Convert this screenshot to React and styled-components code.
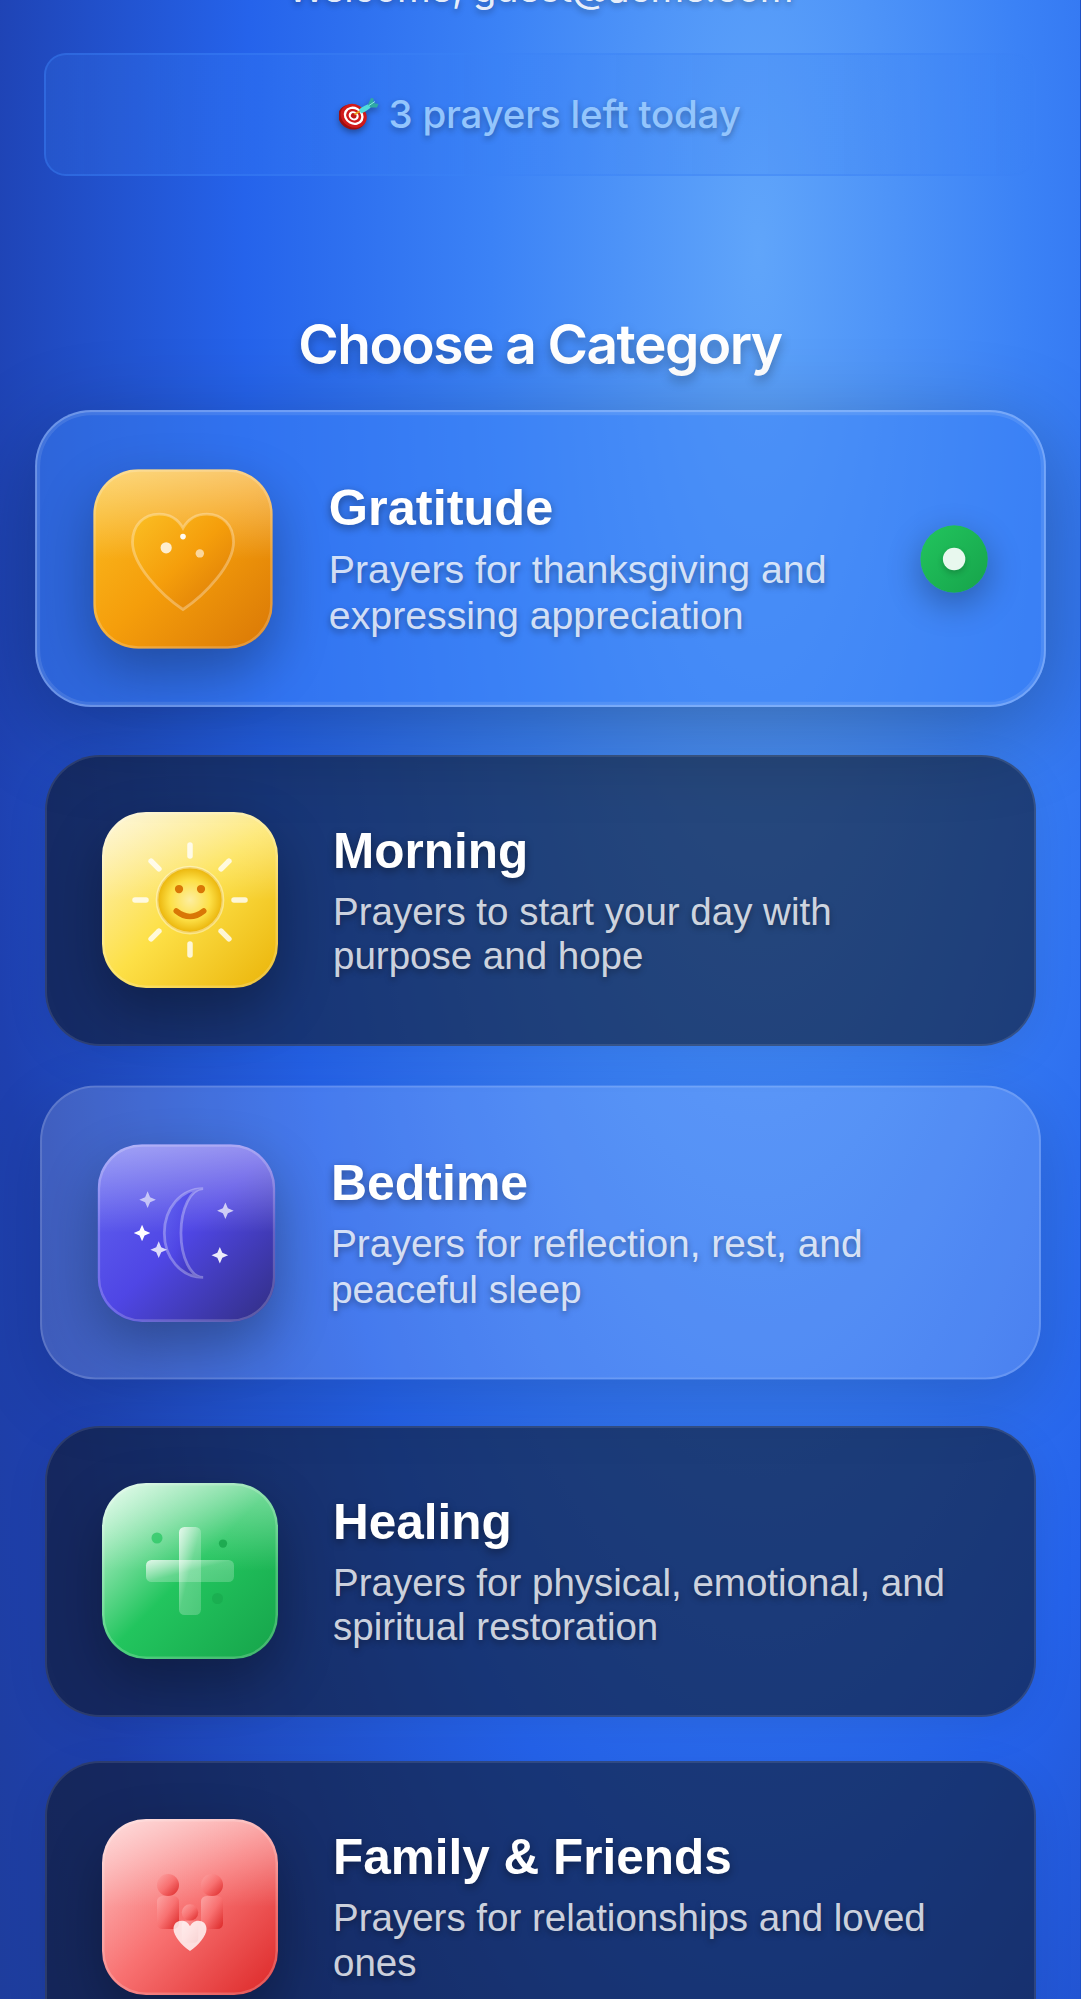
import React from "react";
import styled, { createGlobalStyle, css } from "styled-components";

const Global = createGlobalStyle`
  * { box-sizing: border-box; }
  html, body { margin: 0; padding: 0; height: 1999px; overflow: hidden; background: #1e40af; }
`;

const Page = styled.main`
  height: 1999px;
  overflow: hidden;
  padding: 0 44px;
  display: flex;
  flex-direction: column;
  background: radial-gradient(1070px 3475px at 758px 250px, #60a5fa 0%, #3b82f6 25%, #2563eb 48%, #1e40af 74%, #1e3a8a 100%);
  border-right: 1px solid #1d4fc4;
  font-family: "Liberation Sans", Arial, sans-serif;
`;

const Welcome = styled.p`
  margin: -35px 0 0;
  height: 46px;
  line-height: 46px;
  text-align: center;
  font-family: Inter, sans-serif;
  font-size: 38.5px;
  letter-spacing: -0.6px;
  color: rgba(255, 255, 255, 0.9);
  text-shadow: 0 3px 6px rgba(0, 0, 0, 0.3);
`;

const Quota = styled.section`
  margin-top: 42px;
  height: 123px;
  flex-shrink: 0;
  display: flex;
  align-items: center;
  justify-content: center;
  gap: 9px;
  padding-bottom: 2px;
  border: 2px solid rgba(59, 130, 246, 0.4);
  border-radius: 22px;
  background: linear-gradient(90deg, rgba(59, 130, 246, 0.2), rgba(59, 130, 246, 0.25));
  font-family: Inter, sans-serif;
  font-size: 38.5px;
  font-weight: 500;
  letter-spacing: -0.2px;
  color: #93c5fd;
  text-shadow: 0 3px 6px rgba(0, 0, 0, 0.3);
`;

const Heading = styled.h2`
  margin: 135px 0 42px;
  height: 66px;
  flex-shrink: 0;
  line-height: 66px;
  text-align: center;
  font-family: Inter, sans-serif;
  font-size: 55px;
  font-weight: 600;
  letter-spacing: -1.55px;
  color: #fff;
  text-shadow: 0 5px 11px rgba(0, 0, 0, 0.3);
`;

const List = styled.div`
  display: flex;
  flex-direction: column;
  gap: 44.5px;
  padding-left: 1px;
`;

const variants = {
  dark: css`
    background: rgba(15, 23, 42, 0.6);
    border: 2px solid rgba(255, 255, 255, 0.1);
    box-shadow: 0 11px 44px rgba(0, 0, 0, 0.08);
  `,
  hover: css`
    background: rgba(255, 255, 255, 0.15);
    border: 2px solid rgba(255, 255, 255, 0.15);
    box-shadow: 0 22px 66px rgba(0, 0, 0, 0.15);
    transform: translateY(-3px) scale(1.01);
  `,
  selected: css`
    background: rgba(59, 130, 246, 0.5);
    border: 2px solid rgba(255, 255, 255, 0.3);
    box-shadow: 0 22px 88px rgba(0, 0, 0, 0.3), inset 0 0 0 3px rgba(255, 255, 255, 0.1);
    transform: translateY(-6px) scale(1.02);
  `,
};

const Card = styled.article`
  height: 291px;
  flex-shrink: 0;
  display: flex;
  align-items: center;
  gap: 55px;
  padding: 0 55px;
  border-radius: 55px;
  ${(p) => variants[p.$variant]}
`;

const Tile = styled.div`
  width: 176px;
  height: 176px;
  flex-shrink: 0;
  border-radius: 44px;
  background: linear-gradient(180deg, rgba(255, 255, 255, 0.4), rgba(255, 255, 255, 0) 50%),
    linear-gradient(135deg, ${(p) => p.$colors});
  box-shadow: 0 22px 55px rgba(0, 0, 0, 0.3), inset 0 0 0 2.5px rgba(255, 255, 255, 0.2);
  svg { display: block; width: 100%; height: 100%; }
`;

const Copy = styled.div`
  flex: 1;
  min-width: 0;
  display: flex;
  flex-direction: column;
  gap: 11px;
`;

const Name = styled.h3`
  margin: 0;
  font-size: 49.5px;
  line-height: 57px;
  font-weight: 700;
  color: #fff;
  text-shadow: 0 3px 8px rgba(0, 0, 0, 0.4);
`;

const Note = styled.p`
  margin: 0;
  font-size: 38.5px;
  line-height: 44.3px;
  color: rgba(255, 255, 255, 0.8);
  text-shadow: 0 3px 6px rgba(0, 0, 0, 0.35);
`;

const Check = styled.span`
  width: 66px;
  height: 66px;
  flex-shrink: 0;
  border-radius: 50%;
  display: grid;
  place-items: center;
  background: linear-gradient(135deg, #22c55e, #16a34a);
  box-shadow: 0 11px 33px rgba(0, 0, 0, 0.3);
`;

const Dot = styled.i`
  width: 22px;
  height: 22px;
  border-radius: 50%;
  background: rgba(255, 255, 255, 0.9);
  box-shadow: 0 3px 6px rgba(0, 0, 0, 0.2);
`;

const TargetSvg = styled.svg`
  width: 40px;
  height: 34px;
  filter: drop-shadow(0 3px 3px rgba(0, 0, 0, 0.35));
`;

const Target = () => (
  <TargetSvg viewBox="0 0 40 34">
    <g transform="rotate(28 14 19)">
      <ellipse cx="13.500" cy="20.500" rx="14" ry="12" fill="#9c1010" />
      <ellipse cx="14.500" cy="18.500" rx="13.500" ry="11.500" fill="#d01a1a" />
      <ellipse cx="14.500" cy="18.500" rx="10.300" ry="8.800" fill="#fff" />
      <ellipse cx="14.500" cy="18.500" rx="7.800" ry="6.600" fill="#d01a1a" />
      <ellipse cx="14.500" cy="18.500" rx="5.200" ry="4.400" fill="#fff" />
      <ellipse cx="14.500" cy="18.500" rx="2.900" ry="2.500" fill="#c01616" />
    </g>
    <path d="M15.500 17.500 L21 14" stroke="#e8a020" strokeWidth="2" />
    <path d="M20 12.500 Q26 7.500 31 7 L32.500 9.500 Q29 13.500 22 16.500 Z" fill="#4fdcdc" />
    <path d="M29 7.500 L32 1 L34.500 1.500 L34.500 6 L39.500 7 L38 10.500 L31.500 10.500 Z" fill="#2fa9a4" />
    <path d="M30 8.500 L36 4.500" stroke="#8aeae6" strokeWidth="1" />
  </TargetSvg>
);

const HeartIcon = () => (
  <svg viewBox="0 0 64 64">
    <defs>
      <linearGradient id="hg" x1="0" y1="0" x2="1" y2="1">
        <stop stopColor="#fbbf24" /><stop offset=".5" stopColor="#f59e0b" /><stop offset="1" stopColor="#d97706" />
      </linearGradient>
    </defs>
    <path d="M32 50 C24 44.700 14 34 14 26 C14 20 18 16 23.500 16 C27.300 16 30.300 18 32 21 C33.700 18 36.700 16 40.500 16 C46 16 50 20 50 26 C50 34 40 44.700 32 50 Z" fill="url(#hg)" stroke="#fff" strokeOpacity=".3" strokeWidth="1" />
    <circle cx="26" cy="28" r="2" fill="#fff" opacity=".8" />
    <circle cx="38" cy="30" r="1.500" fill="#fff" opacity=".6" />
    <circle cx="32" cy="24" r="1" fill="#fff" opacity=".95" />
  </svg>
);

const SunIcon = () => (
  <svg viewBox="0 0 64 64">
    <defs>
      <radialGradient id="sg">
        <stop stopColor="#fdeea0" /><stop offset=".6" stopColor="#fde047" /><stop offset="1" stopColor="#eab308" />
      </radialGradient>
    </defs>
    <g stroke="#fff" strokeOpacity=".8" strokeWidth="2" strokeLinecap="round">
      {[0, 45, 90, 135, 180, 225, 270, 315].map((a) => (
        <path key={a} d="M32 12V16" transform={`rotate(${a} 32 32)`} />
      ))}
    </g>
    <circle cx="32" cy="32" r="12" fill="url(#sg)" stroke="#fff" strokeOpacity=".4" />
    <circle cx="28" cy="28" r="1.500" fill="#d97706" />
    <circle cx="36" cy="28" r="1.500" fill="#d97706" />
    <path d="M27 36 Q32 40 37 36" fill="none" stroke="#d97706" strokeWidth="2" strokeLinecap="round" />
  </svg>
);

const STARS = [[18, 20, 0.6], [46, 24, 0.7], [16, 32, 1], [22, 38, 0.8], [44, 40, 0.9]];
const MoonIcon = () => (
  <svg viewBox="0 0 64 64">
    <defs>
      <linearGradient id="mg" x1="0" y1="0" x2="1" y2="1">
        <stop stopColor="#6366f1" /><stop offset=".5" stopColor="#4f46e5" /><stop offset="1" stopColor="#3730a3" />
      </linearGradient>
    </defs>
    <path d="M38 16 C30 16 24 23.200 24 32 C24 40.800 30 48 38 48 C33.500 48 30 40.800 30 32 C30 23.200 33.500 16 38 16" fill="url(#mg)" stroke="#fff" strokeOpacity=".3" />
    {STARS.map(([x, y, o]) => (
      <path key={x} transform={`translate(${x} ${y})`} d="M0 -3 L.9 -.9 L3 0 L.9 .9 L0 3 L-.9 .9 L-3 0 L-.9 -.9 Z" fill="#fff" opacity={o} />
    ))}
  </svg>
);

const CrossIcon = () => (
  <svg viewBox="0 0 64 64">
    <defs>
      <linearGradient id="cg" x1="0" y1="0" x2="1" y2="1">
        <stop stopColor="#fff" stopOpacity=".8" /><stop offset=".5" stopColor="#fff" stopOpacity=".25" /><stop offset="1" stopColor="#fff" stopOpacity=".2" />
      </linearGradient>
    </defs>
    <rect x="28" y="16" width="8" height="32" rx="2" fill="url(#cg)" />
    <rect x="16" y="28" width="32" height="8" rx="2" fill="url(#cg)" />
    <circle cx="20" cy="20" r="2" fill="#22c55e" opacity=".7" />
    <circle cx="44" cy="22" r="1.500" fill="#16a34a" opacity=".8" />
    <circle cx="42" cy="42" r="2" fill="#16a34a" opacity=".5" />
  </svg>
);

const FamilyIcon = () => (
  <svg viewBox="0 0 64 64">
    <defs>
      <linearGradient id="fg" x1="0" y1="0" x2="1" y2="1">
        <stop stopColor="#fca5a5" /><stop offset=".5" stopColor="#f87171" /><stop offset="1" stopColor="#dc2626" />
      </linearGradient>
    </defs>
    <circle cx="24" cy="24" r="4" fill="url(#fg)" />
    <rect x="20" y="28" width="8" height="12" rx="2" fill="url(#fg)" />
    <circle cx="40" cy="24" r="4" fill="url(#fg)" />
    <rect x="36" y="28" width="8" height="12" rx="2" fill="url(#fg)" />
    <circle cx="32" cy="34" r="3" fill="url(#fg)" />
    <rect x="29" y="37" width="6" height="8" rx="1.500" fill="url(#fg)" />
    <path d="M32 48 C29 46 26 42.500 26 40 C26 38 27.300 37 29 37 C30.500 37 31.500 38 32 39 C32.500 38 33.500 37 35 37 C36.700 37 38 38 38 40 C38 42.500 35 46 32 48 Z" fill="#fff" opacity=".8" />
  </svg>
);

const CATEGORIES = [
  { name: "Gratitude", note: "Prayers for thanksgiving and expressing appreciation", variant: "selected", colors: "#fbbf24, #f59e0b 50%, #d97706", Icon: HeartIcon },
  { name: "Morning", note: "Prayers to start your day with purpose and hope", variant: "dark", colors: "#fef3c7, #fde047 50%, #eab308", Icon: SunIcon },
  { name: "Bedtime", note: "Prayers for reflection, rest, and peaceful sleep", variant: "hover", colors: "#6366f1, #4f46e5 50%, #312e81", Icon: MoonIcon },
  { name: "Healing", note: "Prayers for physical, emotional, and spiritual restoration", variant: "dark", colors: "#dcfce7, #22c55e 50%, #16a34a", Icon: CrossIcon },
  { name: "Family & Friends", note: "Prayers for relationships and loved ones", variant: "dark", colors: "#fecaca, #f87171 50%, #dc2626", Icon: FamilyIcon },
];

export default function App() {
  return (
    <>
      <Global />
      <Page>
        <Welcome>Welcome, guest@acme.com</Welcome>
        <Quota><Target />3 prayers left today</Quota>
        <Heading>Choose a Category</Heading>
        <List>
          {CATEGORIES.map(({ name, note, variant, colors, Icon }) => (
            <Card key={name} $variant={variant}>
              <Tile $colors={colors}><Icon /></Tile>
              <Copy>
                <Name>{name}</Name>
                <Note>{note}</Note>
              </Copy>
              {variant === "selected" && <Check><Dot /></Check>}
            </Card>
          ))}
        </List>
      </Page>
    </>
  );
}
